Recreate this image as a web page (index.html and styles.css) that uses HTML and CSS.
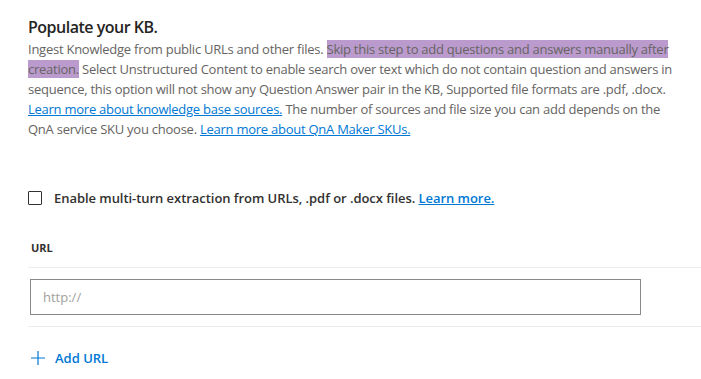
FILE: index.html
```html
<!DOCTYPE html>
<html lang="en">
<head>
    <meta charset="UTF-8">
    <title>Populate your KB</title>
    <link rel="stylesheet" href="styles.css">
</head>
<body>
    <div class="page">
        <h2 class="title">Populate your KB.</h2>
        <p class="intro">
            Ingest Knowledge from public URLs and other files. <span class="mark">Skip this step to add questions and answers manually after creation.</span> Select Unstructured Content to enable search over text which do not contain question and answers in sequence, this option will not show any Question Answer pair in the KB, Supported file formats are .pdf, .docx.
            <a href="#">Learn more about knowledge base sources.</a> The number of sources and file size you can add depends on the QnA service SKU you choose. <a href="#">Learn more about QnA Maker SKUs.</a>
        </p>

        <label class="check-row">
            <span class="check-box"></span>
            <span class="check-text">Enable multi-turn extraction from URLs, .pdf or .docx files. <a href="#">Learn more.</a></span>
        </label>

        <div class="url-section">
            <div class="url-label">URL</div>
            <div class="url-row">
                <input type="text" class="url-input" placeholder="http://">
            </div>
            <a href="#" class="add-url">
                <svg width="14" height="14" viewBox="0 0 14 14"><path d="M7 0v14M0 7h14" stroke="#0078d4" stroke-width="1.2" fill="none"/></svg>
                <span>Add URL</span>
            </a>
        </div>
    </div>
</body>
</html>
```

FILE: styles.css
```css
body {
    margin: 0;
    padding: 0;
    background-color: #fff;
    font-family: "Open Sans", "Noto Sans", sans-serif;
}
.page {
    padding: 15px 0 0 28px;
}
.title {
    margin: 0;
    font-size: 16px;
    font-weight: 600;
    letter-spacing: -0.5px;
    color: #252423;
    line-height: 24px;
}
.intro {
    margin: 0;
    width: 648px;
    font-size: 13px;
    letter-spacing: -0.25px;
    line-height: 20px;
    color: #666462;
}
.intro a, .check-text a {
    color: #0078d4;
}
.mark {
    background-color: #bb9bcd;
}
.check-row {
    display: flex;
    align-items: center;
    gap: 12px;
    margin-top: 50px;
}
.check-box {
    width: 12px;
    height: 12px;
    border: 1px solid #323130;
    border-radius: 1px;
}
.check-text {
    font-size: 13px;
    font-weight: 600;
    letter-spacing: -0.05px;
    color: #323130;
}
.url-section {
    margin-top: 34px;
}
.url-label {
    padding-left: 3px;
    font-size: 11px;
    font-weight: 700;
    color: #323130;
    line-height: 14px;
    padding-bottom: 12px;
    border-bottom: 1px solid #edebe9;
}
.url-row {
    padding: 11px 0 11px 2px;
    border-bottom: 1px solid #edebe9;
}
.url-input {
    display: block;
    box-sizing: border-box;
    width: 611px;
    height: 36px;
    padding: 0 12px;
    border: 1px solid #8a8886;
    font-family: inherit;
    font-size: 13px;
    color: #323130;
}
.url-input::placeholder {
    color: #a19f9d;
}
.add-url {
    display: flex;
    align-items: center;
    gap: 10px;
    margin-top: 22px;
    padding-left: 3px;
    text-decoration: none;
    color: #0078d4;
    font-size: 13px;
    font-weight: 600;
}
```
